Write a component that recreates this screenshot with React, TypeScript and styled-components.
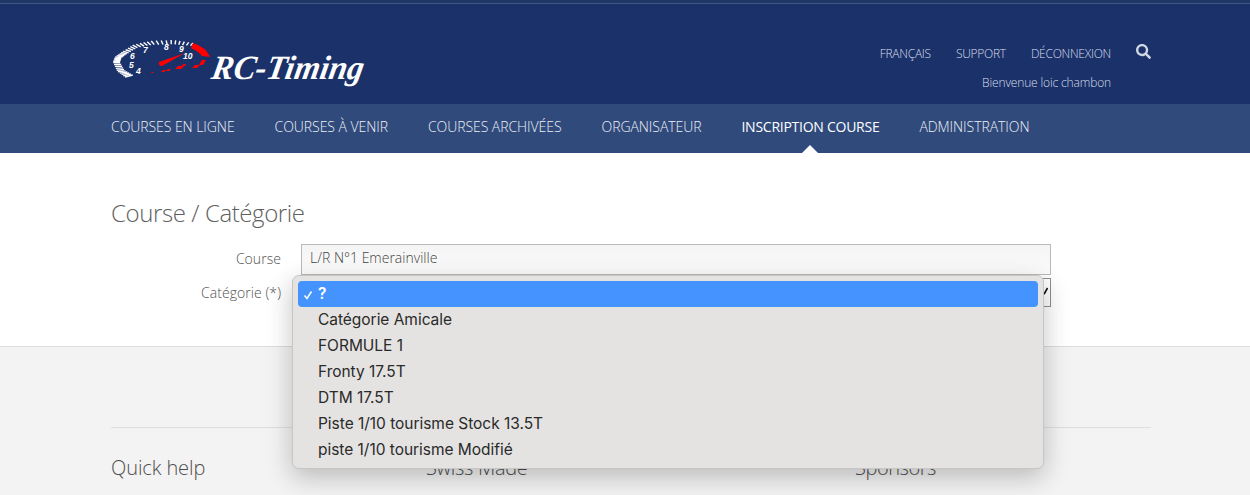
import React from 'react';
import styled, { createGlobalStyle } from 'styled-components';
import { FaSearch } from 'react-icons/fa';

const GlobalStyle = createGlobalStyle`
  html, body {
    margin: 0;
    padding: 0;
    height: 495px;
    overflow: hidden;
    background: #fff;
    font-family: "Open Sans", "Liberation Sans", sans-serif;
  }
  * { box-sizing: border-box; }
`;

const Page = styled.div`
  position: relative;
  width: 1250px;
  height: 495px;
  overflow: hidden;
`;

const Wrap = styled.div`
  padding: 0 99px 0 111px;
`;

const TopBand = styled.header`
  height: 104px;
  background: #1b3169;
  border-top: 3px solid #1f3767;
  box-shadow: inset 0 1px 0 #3d5484;
`;

const TopInner = styled(Wrap)`
  display: flex;
  justify-content: space-between;
  height: 101px;
  padding-left: 110px;
`;

const Logo = styled.svg`
  width: 300px;
  height: 60px;
  margin-top: 32px;
  flex: none;
`;

const TopRight = styled.div`
  display: flex;
  flex-direction: column;
  align-items: flex-end;
  padding-top: 41px;
`;

const TopLinks = styled.div`
  display: flex;
  align-items: flex-start;
`;

const TopLink = styled.a`
  font-size: 12px;
  font-weight: 300;
  line-height: 20px;
  letter-spacing: -0.26px;
  color: #d8deea;
  margin-right: 25px;
`;

const SearchButton = styled.span`
  display: block;
  color: #cfd6e4;
  font-size: 15px;
  line-height: 15px;
`;

const Welcome = styled.div`
  font-size: 12px;
  font-weight: 300;
  line-height: 20px;
  letter-spacing: -0.15px;
  color: #d8deea;
  margin: 9px 40px 0 0;
`;

const NavBand = styled.nav`
  height: 49px;
  background: #314a7c;
`;

const NavList = styled(Wrap)`
  display: flex;
  gap: 40px;
`;

const NavItem = styled.a<{ $active?: boolean }>`
  position: relative;
  font-size: 14px;
  font-weight: ${(p) => (p.$active ? 400 : 300)};
  line-height: 46px;
  letter-spacing: ${(p) => (p.$active ? '-0.26px' : '-0.06px')};
  white-space: nowrap;
  color: ${(p) => (p.$active ? '#ffffff' : '#eef1f6')};

  ${(p) =>
    p.$active &&
    `&::after {
      content: '';
      position: absolute;
      left: 50%;
      bottom: -3px;
      margin-left: -8px;
      border: 8px solid transparent;
      border-top: 0;
      border-bottom-color: #fff;
    }`}
`;

const Main = styled(Wrap)`
  height: 193px;
  padding-top: 45px;
`;

const Title = styled.h1`
  margin: 0 0 16px;
  font-size: 24px;
  font-weight: 300;
  line-height: 30px;
  letter-spacing: -0.4px;
  color: #5f5f5f;
`;

const FormRow = styled.div<{ $gap?: number }>`
  display: flex;
  align-items: center;
  margin-bottom: ${(p) => p.$gap ?? 0}px;
`;

const Label = styled.label<{ $lift?: number }>`
  width: 170px;
  margin-right: 20px;
  margin-bottom: ${(p) => p.$lift ?? 0}px;
  font-size: 14px;
  font-weight: 300;
  letter-spacing: 0.05px;
  text-align: right;
  color: #505050;
`;

const TextField = styled.div`
  width: 750px;
  height: 31px;
  flex: none;
  padding: 0 8px;
  font-size: 14px;
  font-weight: 300;
  line-height: 26px;
  letter-spacing: 0;
  color: #444;
  background: linear-gradient(#f4f4f4, #fcfcfc);
  border: 1px solid #b9b9b9;
`;

const SelectBox = styled.div`
  display: flex;
  justify-content: flex-end;
  align-items: center;
  width: 750px;
  height: 29px;
  flex: none;
  padding: 0 1px 6px 0;
  background: #fff;
  border: 1px solid #8f8f8f;
`;

const Footer = styled.footer`
  height: 149px;
  background: #f3f3f3;
  border-top: 1px solid #dcdcdc;
`;

const FooterInner = styled(Wrap)`
  padding-top: 80px;
`;

const FooterColumns = styled.div`
  display: flex;
  padding-top: 25px;
  border-top: 1px solid #dedede;
`;

const FooterTitle = styled.h3<{ $width: number; $spacing?: number }>`
  width: ${(p) => p.$width}px;
  margin: 0;
  font-size: 20px;
  font-weight: 300;
  line-height: 30px;
  letter-spacing: ${(p) => p.$spacing ?? -0.1}px;
  color: #4e4e4e;
`;

const Menu = styled.ul`
  position: absolute;
  left: 292px;
  top: 275px;
  width: 752px;
  height: 194px;
  margin: 0;
  padding: 5px;
  list-style: none;
  background: #e4e3e1;
  border: 1px solid #c6c6c5;
  border-radius: 7px;
  box-shadow: 0 8px 26px rgba(0, 0, 0, 0.24);
  font-family: Inter, "Liberation Sans", sans-serif;
`;

const MenuItem = styled.li<{ $selected?: boolean }>`
  position: relative;
  height: 26px;
  padding-left: 20px;
  border-radius: 4px;
  font-size: 15.5px;
  font-weight: ${(p) => (p.$selected ? 600 : 400)};
  line-height: 25px;
  letter-spacing: -0.03px;
  color: ${(p) => (p.$selected ? '#fff' : '#2a2a2a')};
  background: ${(p) => (p.$selected ? '#4493ff' : 'transparent')};
`;

const CheckMark = styled.svg`
  position: absolute;
  left: 5px;
  top: 9px;
  width: 10px;
  height: 10px;
`;

const categories = [
  'Catégorie Amicale',
  'FORMULE 1',
  'Fronty 17.5T',
  'DTM 17.5T',
  'Piste 1/10 tourisme Stock 13.5T',
  'piste 1/10 tourisme Modifié',
];

const navItems = [
  'COURSES EN LIGNE',
  'COURSES À VENIR',
  'COURSES ARCHIVÉES',
  'ORGANISATEUR',
  'INSCRIPTION COURSE',
  'ADMINISTRATION',
];

// dial outline in logo coordinates, walked from the "4" end up to the red zone
const dialCurve: [number, number][] = [
  [15, 42], [7, 36], [3, 27], [5, 22], [12, 17], [23, 10], [40, 6], [63, 5], [83, 8],
];

const dialTicks = () => {
  const lines: React.ReactElement[] = [];
  const count = 38;
  const segs = dialCurve.length - 1;
  for (let i = 0; i < count; i++) {
    const t = (i / (count - 1)) * segs;
    const s = Math.min(Math.floor(t), segs - 1);
    const f = t - s;
    const x = dialCurve[s][0] + (dialCurve[s + 1][0] - dialCurve[s][0]) * f;
    const y = dialCurve[s][1] + (dialCurve[s + 1][1] - dialCurve[s][1]) * f;
    const dx = 62 - x;
    const dy = 30 - y;
    const len = Math.hypot(dx, dy);
    const size = 8 - 4.5 * (i / count);
    lines.push(
      <line
        key={i}
        x1={x}
        y1={y}
        x2={x + (dx / len) * size}
        y2={y + (dy / len) * size}
        stroke="#fff"
        strokeWidth={1.4}
      />
    );
  }
  return lines;
};

const dialNumbers: [string, number, number][] = [
  ['4', 26, 39], ['5', 19, 33], ['6', 20, 24], ['7', 33, 18], ['8', 54, 15], ['9', 69, 17], ['10', 73, 24],
];

const LogoMark = () => (
  <Logo viewBox="0 0 300 60">
    {dialTicks()}
    {dialNumbers.map(([n, x, y]) => (
      <text key={n} x={x} y={y} fill="#fff" fontSize={8.5} fontWeight={700} fontStyle="italic" fontFamily="Liberation Sans, sans-serif">
        {n}
      </text>
    ))}
    <path d="M83 8 Q96 12 100 22 L92 21 Q88 16 81 13 Z" fill="#f00" />
    <path d="M49 27 L75 18 L52 31 Q48 31 49 27 Z" fill="#f00" />
    <path
      d="M42 37h2l-1 1h-2z M53 35h3l-2 2h-3z M58 34h3l-2 2h-3z M68 31h6l-3 3h-6z M73 29h3l-1 2h-3z M85 30h5l-3 3h-5z M92 25h4l-3 5h-4z"
      fill="#f00"
    />
    <text
      x={108}
      y={44}
      transform="skewX(-10)"
      fill="#fff"
      fontSize={34}
      fontWeight={700}
      fontStyle="italic"
      fontFamily="Liberation Serif, serif"
      textLength={152}
      lengthAdjust="spacingAndGlyphs"
    >
      RC-Timing
    </text>
  </Logo>
);

export default function App() {
  return (
    <Page>
      <GlobalStyle />
      <TopBand>
        <TopInner>
          <LogoMark />
          <TopRight>
            <TopLinks>
              <TopLink>FRANÇAIS</TopLink>
              <TopLink>SUPPORT</TopLink>
              <TopLink>DÉCONNEXION</TopLink>
              <SearchButton>
                <FaSearch />
              </SearchButton>
            </TopLinks>
            <Welcome>Bienvenue loic chambon</Welcome>
          </TopRight>
        </TopInner>
      </TopBand>
      <NavBand>
        <NavList>
          {navItems.map((item) => (
            <NavItem key={item} $active={item === 'INSCRIPTION COURSE'}>
              {item}
            </NavItem>
          ))}
        </NavList>
      </NavBand>
      <Main>
        <Title>Course / Catégorie</Title>
        <FormRow $gap={3}>
          <Label $lift={2}>Course</Label>
          <TextField>L/R N°1 Emerainville</TextField>
        </FormRow>
        <FormRow>
          <Label>Catégorie (*)</Label>
          <SelectBox>
            <svg width="7" height="10" viewBox="0 0 7 10">
              <path d="M1 7l1.5 1.5L5.5 3" fill="none" stroke="#111" strokeWidth="1.6" />
            </svg>
          </SelectBox>
        </FormRow>
      </Main>
      <Footer>
        <FooterInner>
          <FooterColumns>
            <FooterTitle $width={315}>Quick help</FooterTitle>
            <FooterTitle $width={429} $spacing={-0.3}>Swiss Made</FooterTitle>
            <FooterTitle $width={200} $spacing={-0.45}>Sponsors</FooterTitle>
          </FooterColumns>
        </FooterInner>
      </Footer>
      <Menu>
        <MenuItem $selected>
          <CheckMark viewBox="0 0 10 10">
            <path d="M1.5 5.5L4 8.5 8.5 1.5" fill="none" stroke="#fff" strokeWidth="1.5" />
          </CheckMark>
          ?
        </MenuItem>
        {categories.map((c) => (
          <MenuItem key={c}>{c}</MenuItem>
        ))}
      </Menu>
    </Page>
  );
}
